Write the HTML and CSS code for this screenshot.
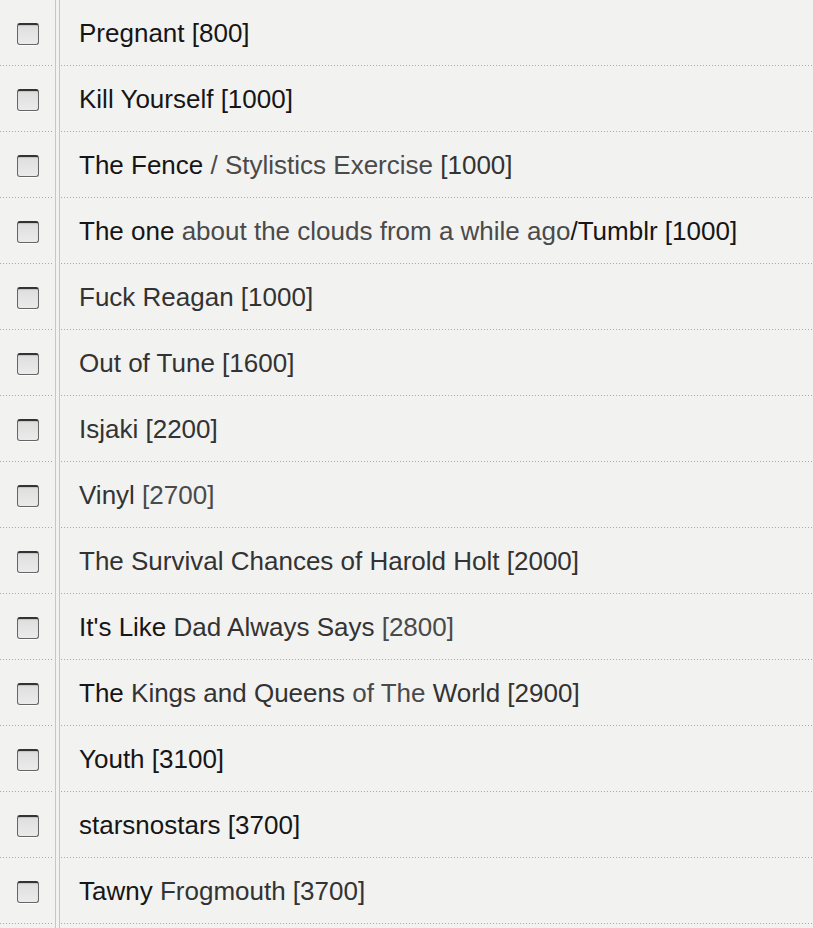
FILE: index.html
```html
<!DOCTYPE html>
<html>
<head>
<meta charset="utf-8">
<link rel="stylesheet" href="styles.css">
</head>
<body>
<ul class="list">
  <li class="row"><span class="check"><span class="box"></span></span><span class="rule"></span><span class="title"><span class="text dark">Pregnant [800]</span></span></li>
  <li class="row"><span class="check"><span class="box"></span></span><span class="rule"></span><span class="title"><span class="text dark">Kill Yourself [1000]</span></span></li>
  <li class="row"><span class="check"><span class="box"></span></span><span class="rule"></span><span class="title"><span class="text"><span class="dk">The Fence</span> <span class="lt">/ Stylistics Exercise</span> [1000]</span></span></li>
  <li class="row"><span class="check"><span class="box"></span></span><span class="rule"></span><span class="title"><span class="text"><span class="dk">The one</span> <span class="lt">about the clouds from a while ago</span><span class="dk">/Tumblr [1000]</span></span></span></li>
  <li class="row"><span class="check"><span class="box"></span></span><span class="rule"></span><span class="title"><span class="text">Fuck Reagan [1000]</span></span></li>
  <li class="row"><span class="check"><span class="box"></span></span><span class="rule"></span><span class="title"><span class="text">Out of Tune [1600]</span></span></li>
  <li class="row"><span class="check"><span class="box"></span></span><span class="rule"></span><span class="title"><span class="text">Isjaki [2200]</span></span></li>
  <li class="row"><span class="check"><span class="box"></span></span><span class="rule"></span><span class="title"><span class="text">Vinyl <span class="lt">[2700]</span></span></span></li>
  <li class="row"><span class="check"><span class="box"></span></span><span class="rule"></span><span class="title"><span class="text">The Survival Chances of Harold Holt [2000]</span></span></li>
  <li class="row"><span class="check"><span class="box"></span></span><span class="rule"></span><span class="title"><span class="text"><span class="dk">It's Like</span> Dad Always Says <span class="lt">[2800]</span></span></span></li>
  <li class="row"><span class="check"><span class="box"></span></span><span class="rule"></span><span class="title"><span class="text"><span class="dk">The</span> Kings and Queens <span class="lt">of The</span> World [2900]</span></span></li>
  <li class="row"><span class="check"><span class="box"></span></span><span class="rule"></span><span class="title"><span class="text dark">Youth [3100]</span></span></li>
  <li class="row"><span class="check"><span class="box"></span></span><span class="rule"></span><span class="title"><span class="text dark">starsnostars [3700]</span></span></li>
  <li class="row"><span class="check"><span class="box"></span></span><span class="rule"></span><span class="title"><span class="text"><span class="dk">Tawny</span> Frogmouth [3700]</span></span></li>
</ul>
</body>
</html>
```
FILE: styles.css
```css
html, body {
  margin: 0;
  padding: 0;
  height: 100%;
}
body {
  background-color: #f2f2f1;
  background-image:
    linear-gradient(to right, transparent 55px, #c6c6c6 55px, #c6c6c6 56px, transparent 56px, transparent 59px, #c6c6c6 59px, #c6c6c6 60px, transparent 60px);
  font-family: "Liberation Sans", Arial, Helvetica, sans-serif;
  color: #333;
  overflow: hidden;
}
.list {
  list-style: none;
  margin: 0;
  padding: 0;
}
.row {
  display: flex;
  height: 66px;
  align-items: stretch;
}
.check {
  width: 53px;
  display: flex;
  align-items: center;
  padding-left: 17px;
  box-sizing: border-box;
  background-image: repeating-linear-gradient(to right, #a9a9a9 0, #a9a9a9 1px, transparent 1px, transparent 3px);
  background-size: 100% 1px;
  background-position: 0 65px;
  background-repeat: no-repeat;
}
.box {
  width: 22px;
  height: 22px;
  box-sizing: border-box;
  border: 1px solid #666;
  border-top: 2px solid #333;
  border-radius: 3px;
  background: linear-gradient(#dedede, #ebebeb);
  box-shadow: inset 0 1px 1px rgba(0,0,0,0.12), 0 1px 0 rgba(255,255,255,0.8);
  margin-top: 1px;
}
.rule {
  width: 8px;
}
.title {
  flex: 1;
  display: flex;
  align-items: center;
  padding-left: 18px;
  padding-top: 1px;
  font-size: 26px;
  color: #333;
  background-image: repeating-linear-gradient(to right, #a9a9a9 0, #a9a9a9 1px, transparent 1px, transparent 3px);
  background-size: 100% 1px;
  background-position: 0 65px;
  background-repeat: no-repeat;
}
.text {
  white-space: pre;
}
.dark, .dk {
  color: #161616;
}
.lt {
  color: #4a4a4a;
}
```
